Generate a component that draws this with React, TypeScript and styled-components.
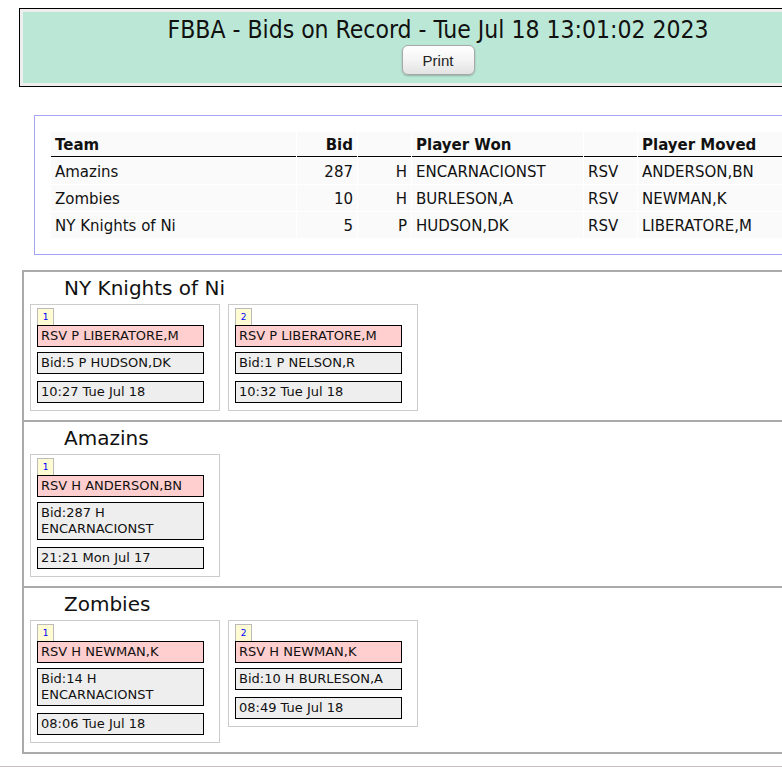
import React, { ReactElement } from 'react'
import styled, { createGlobalStyle } from 'styled-components'

type Bid = {
    team: string,
    bid: number,
    pos: string,
    won: string,
    kind: string,
    moved: string
}

type Card = {
    moved: string,
    bid: string,
    time: string
}

type Team = {
    name: string,
    cards: Array<Card>
}

const bids: Array<Bid> = [
    { team: 'Amazins', bid: 287, pos: 'H', won: 'ENCARNACIONST', kind: 'RSV', moved: 'ANDERSON,BN' },
    { team: 'Zombies', bid: 10, pos: 'H', won: 'BURLESON,A', kind: 'RSV', moved: 'NEWMAN,K' },
    { team: 'NY Knights of Ni', bid: 5, pos: 'P', won: 'HUDSON,DK', kind: 'RSV', moved: 'LIBERATORE,M' },
]

const teams: Array<Team> = [
    {
        name: 'NY Knights of Ni',
        cards: [
            { moved: 'RSV P LIBERATORE,M', bid: 'Bid:5 P HUDSON,DK', time: '10:27 Tue Jul 18' },
            { moved: 'RSV P LIBERATORE,M', bid: 'Bid:1 P NELSON,R', time: '10:32 Tue Jul 18' },
        ]
    },
    {
        name: 'Amazins',
        cards: [
            { moved: 'RSV H ANDERSON,BN', bid: 'Bid:287 H ENCARNACIONST', time: '21:21 Mon Jul 17' },
        ]
    },
    {
        name: 'Zombies',
        cards: [
            { moved: 'RSV H NEWMAN,K', bid: 'Bid:14 H ENCARNACIONST', time: '08:06 Tue Jul 18' },
            { moved: 'RSV H NEWMAN,K', bid: 'Bid:10 H BURLESON,A', time: '08:49 Tue Jul 18' },
        ]
    },
]

const GlobalStyle = createGlobalStyle`
  html, body {
    margin: 0;
    overflow: hidden;
    background: #fff;
    font-family: "DejaVu Sans", Verdana, sans-serif;
    color: #111;
  }
`

const Page = styled.div`
  padding-top: 8px;
`

const Header = styled.div`
  box-sizing: border-box;
  width: 838px;
  margin-left: 19px;
  border: 1px solid #000;
  padding: 3px;
  background: #eeeeee;
`

const HeaderInner = styled.div`
  background: #bbe8d6;
  text-align: center;
  padding: 5px 0 8px;
`

const Title = styled.div`
  font-family: "DejaVu Sans Condensed", "DejaVu Sans", sans-serif;
  font-stretch: condensed;
  font-size: 24.5px;
  line-height: 26px;
  color: #111;
`

const PrintButton = styled.button`
  display: block;
  margin: 2px auto 0;
  width: 73px;
  height: 30px;
  border: 1px solid #a8a8a8;
  border-radius: 6px;
  background: linear-gradient(#ffffff, #f4f4f4 50%, #e2e2e2);
  box-shadow: 0 1px 2px rgba(0,0,0,0.25);
  font-family: "Liberation Sans", Arial, sans-serif;
  font-size: 15px;
  color: #222;
  padding: 0;
`

const BidsPanel = styled.div`
  width: max-content;
  margin: 28px 0 0 34px;
  border: 1px solid #a4a4f4;
  padding: 15px;
`

const Table = styled.table`
  border-spacing: 1px;
  table-layout: fixed;
  font-size: 15px;
`

const Th = styled.th<{ $right?: boolean }>`
  background: #fafafa;
  text-align: ${p => p.$right ? 'right' : 'left'};
  padding: 4px 4px 2px 4px;
  line-height: 18px;
  border-bottom: 1px solid #000;
  font-weight: bold;
`

const Td = styled.td<{ $right?: boolean }>`
  background: #fafafa;
  text-align: ${p => p.$right ? 'right' : 'left'};
  padding: 5px 4px 3px 4px;
  line-height: 18px;
`

const Teams = styled.div`
  width: 900px;
  margin: 15px 0 0 22px;
  border-left: 2px solid #aaaaaa;
  border-bottom: 2px solid #aaaaaa;
`

const Section = styled.div`
  border-top: 2px solid #aaaaaa;
`

const TeamName = styled.div`
  height: 32px;
  line-height: 33px;
  padding-left: 40px;
  font-size: 20px;
`

const CardRow = styled.div`
  display: flex;
  align-items: flex-start;
  gap: 8px;
  padding: 0 6px 9px;
`

const CardBox = styled.div`
  box-sizing: border-box;
  width: 190px;
  border: 1px solid #cccccc;
  padding: 3px 15px 7px 6px;
`

const Badge = styled.div`
  box-sizing: border-box;
  width: 17px;
  height: 17px;
  border: 1px solid #bbbbbb;
  border-bottom: none;
  background: #fffbd2;
  color: #0000ff;
  font-size: 9px;
  line-height: 16px;
  text-align: center;
`

const Line = styled.div<{ $pink?: boolean, $gap?: number }>`
  margin-top: ${p => p.$gap ?? 0}px;
  border: 1px solid #000;
  padding: 2px 3px;
  font-size: 13px;
  line-height: 16px;
  background: ${p => p.$pink ? '#ffcfcf' : '#eeeeee'};
`

const BottomRule = styled.div`
  margin-top: 12px;
  border-top: 2px solid #c8c0c0;
`

export default function App(): ReactElement {
    return (
        <Page>
            <GlobalStyle />
            <Header>
                <HeaderInner>
                    <Title>FBBA - Bids on Record - Tue Jul 18 13:01:02 2023</Title>
                    <PrintButton>Print</PrintButton>
                </HeaderInner>
            </Header>
            <BidsPanel>
                <Table>
                    <colgroup>
                        <col style={{ width: 245 }} />
                        <col style={{ width: 60 }} />
                        <col style={{ width: 53 }} />
                        <col style={{ width: 171 }} />
                        <col style={{ width: 53 }} />
                        <col style={{ width: 200 }} />
                    </colgroup>
                    <thead>
                        <tr>
                            <Th>Team</Th>
                            <Th $right>Bid</Th>
                            <Th></Th>
                            <Th>Player Won</Th>
                            <Th></Th>
                            <Th>Player Moved</Th>
                        </tr>
                    </thead>
                    <tbody>
                        {bids.map(b => (
                            <tr key={b.team}>
                                <Td>{b.team}</Td>
                                <Td $right>{b.bid}</Td>
                                <Td $right>{b.pos}</Td>
                                <Td>{b.won}</Td>
                                <Td>{b.kind}</Td>
                                <Td>{b.moved}</Td>
                            </tr>
                        ))}
                    </tbody>
                </Table>
            </BidsPanel>
            <Teams>
                {teams.map(t => (
                    <Section key={t.name}>
                        <TeamName>{t.name}</TeamName>
                        <CardRow>
                            {t.cards.map((c, i) => (
                                <CardBox key={i}>
                                    <Badge>{i + 1}</Badge>
                                    <Line $pink>{c.moved}</Line>
                                    <Line $gap={5}>{c.bid}</Line>
                                    <Line $gap={7}>{c.time}</Line>
                                </CardBox>
                            ))}
                        </CardRow>
                    </Section>
                ))}
            </Teams>
            <BottomRule />
        </Page>
    )
}
